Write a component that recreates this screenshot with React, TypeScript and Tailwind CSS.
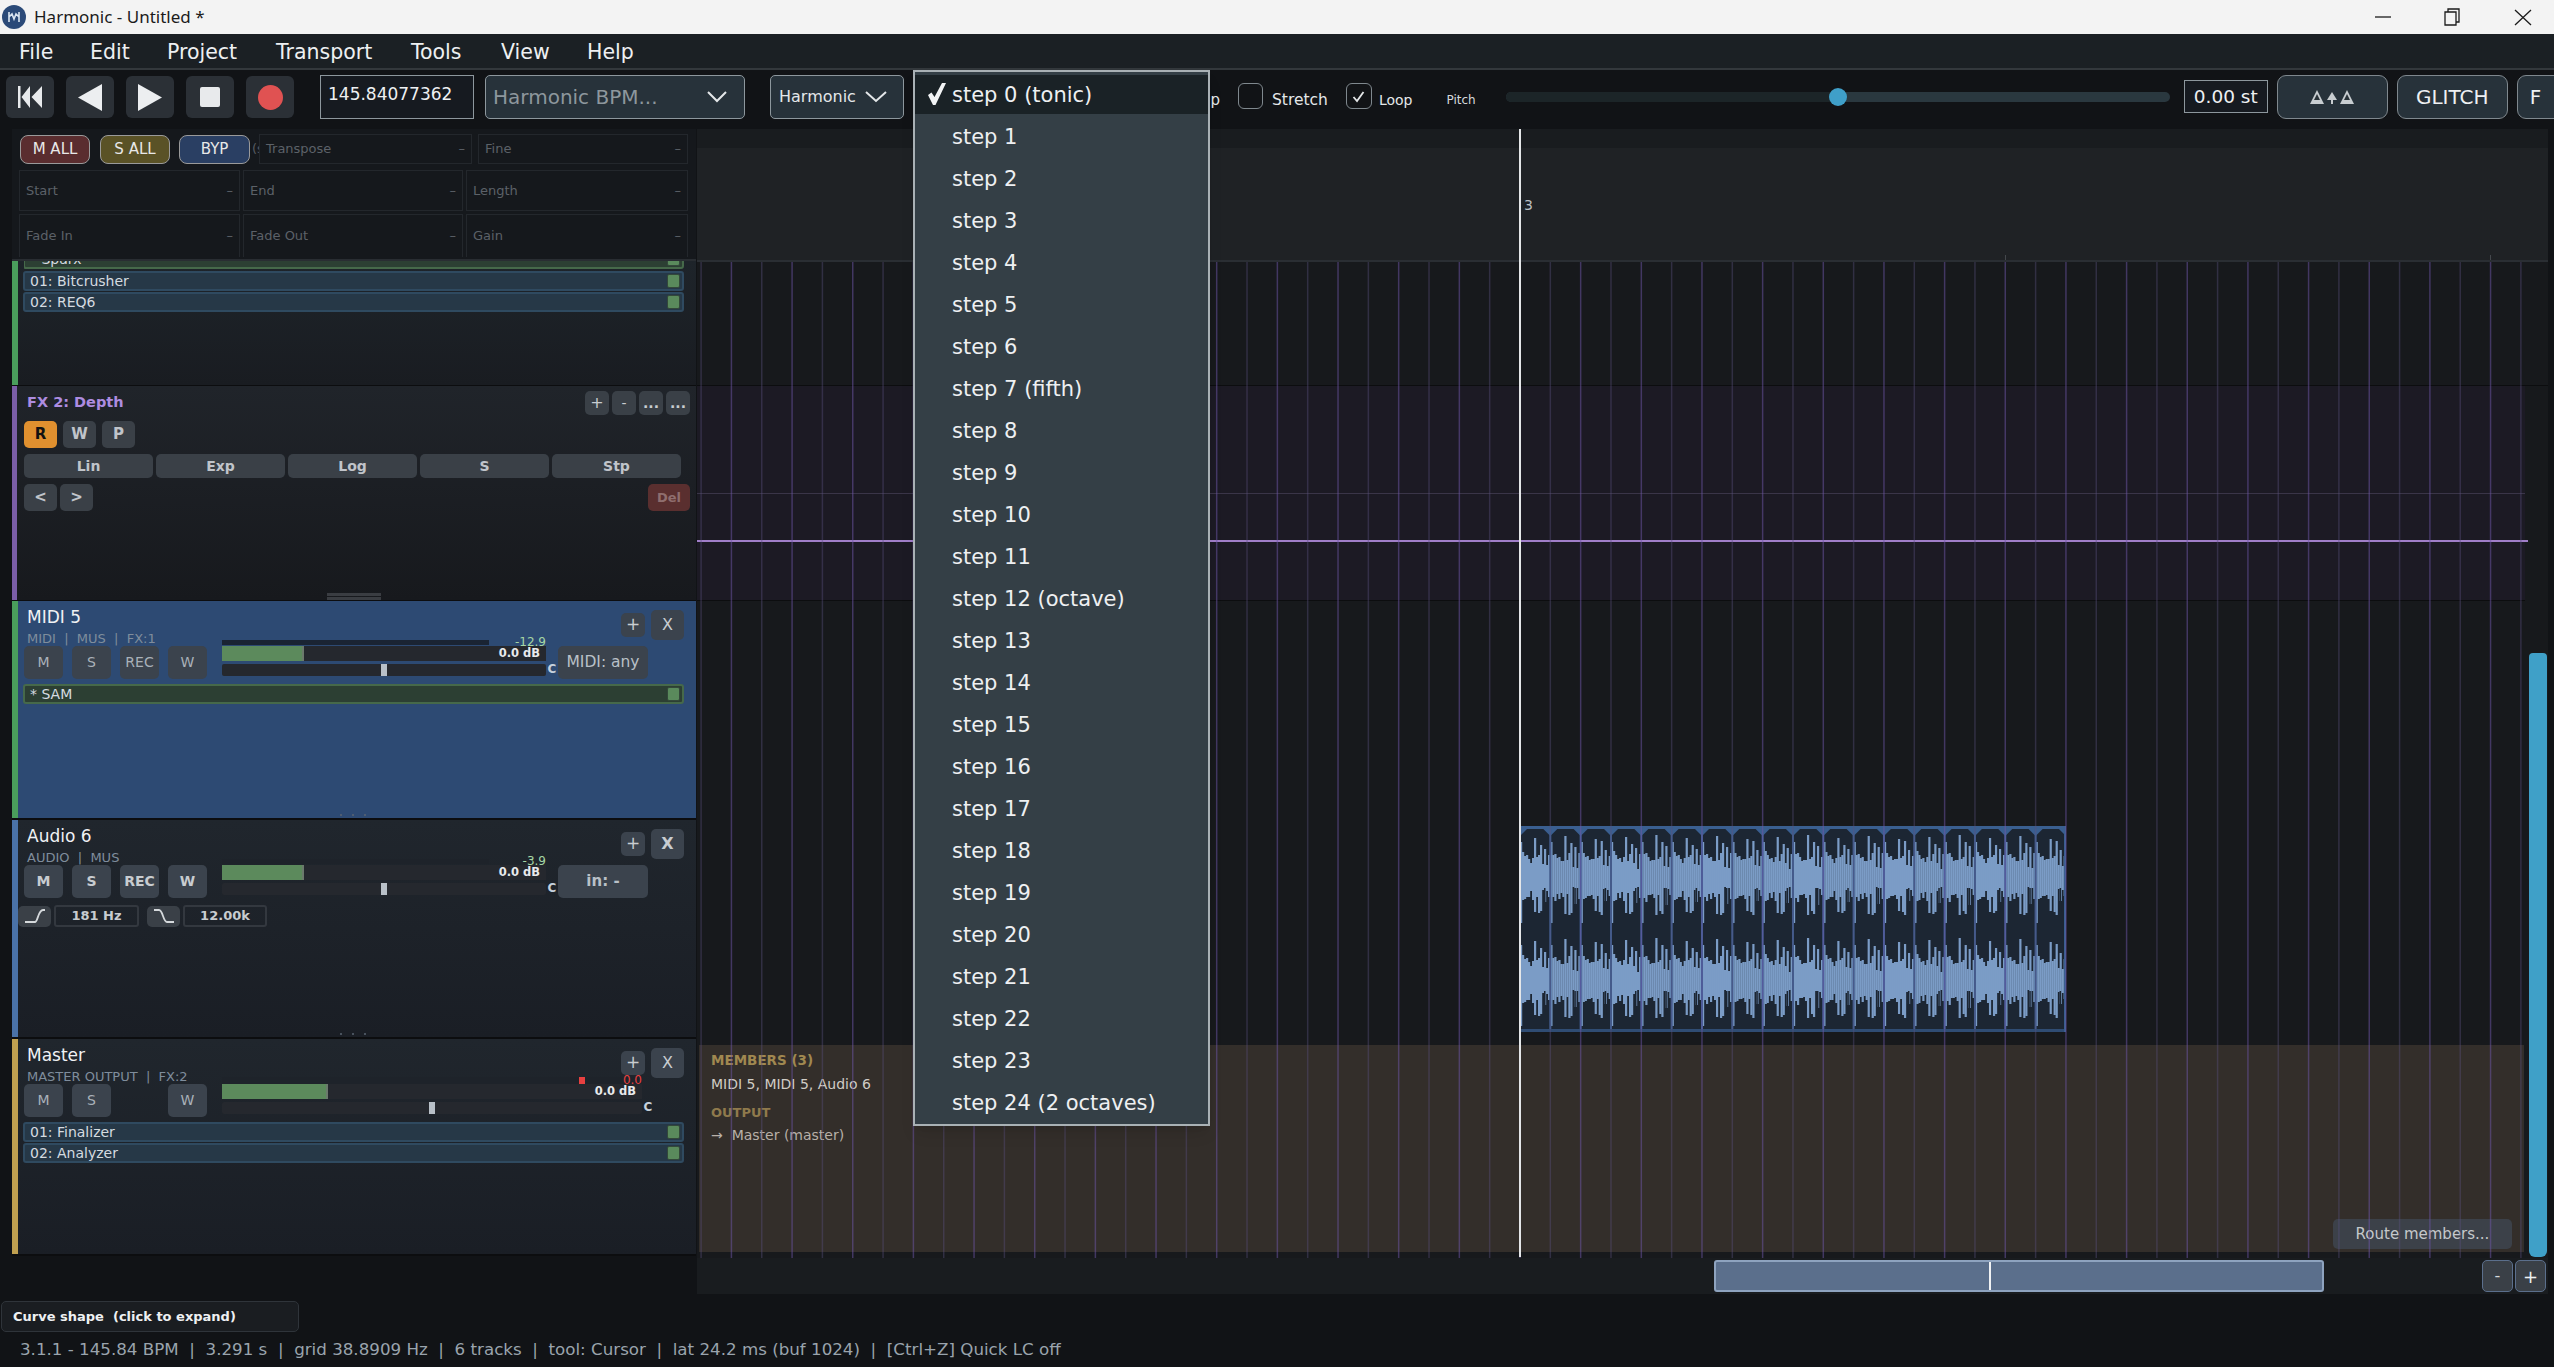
import type { ReactNode } from 'react';

const STEPS = [
  'step 0 (tonic)', 'step 1', 'step 2', 'step 3', 'step 4', 'step 5', 'step 6', 'step 7 (fifth)', 'step 8', 'step 9',
  'step 10', 'step 11', 'step 12 (octave)', 'step 13', 'step 14', 'step 15', 'step 16', 'step 17', 'step 18', 'step 19',
  'step 20', 'step 21', 'step 22', 'step 23', 'step 24 (2 octaves)',
];
const MENUS = [
  { label: 'File', w: 71 }, { label: 'Edit', w: 77 }, { label: 'Project', w: 109 }, { label: 'Transport', w: 135 },
  { label: 'Tools', w: 90 }, { label: 'View', w: 86 }, { label: 'Help', w: 60 },
];

// one 30px repeat of the clip's audio, in px above / below the channel centre
const WAVE_UP = [33, 22, 20, 18, 16, 14, 16, 38, 16, 20, 32, 10, 27, 8, 20];
const WAVE_DOWN = [48, 24, 25, 20, 22, 18, 24, 38, 20, 38, 38, 14, 28, 14, 22];
const GRID = 30.33;
const PLAYHEAD = 823;

function Btn({ className, children }: { className: string; children?: ReactNode }) {
  return <button className={`flex shrink-0 items-center justify-center rounded-[5px] ${className}`}>{children}</button>;
}

function Plugin({ label, green }: { label: string; green?: boolean }) {
  return (
    <div className={`-ml-px flex h-[20px] items-center justify-between rounded-[3px] border-2 pl-[5px] pr-[2px] text-[14px] text-[#d5dbe0] ${green ? 'border-[#46694a] bg-[#2c3f33]' : 'border-[#2f4a60] bg-[#263847]'}`}>
      <span>{label}</span>
      <span className="h-[14px] w-[13px] rounded-[2px] border border-[#33483a] bg-[#5a8a5c]" />
    </div>
  );
}

function Field({ label, className }: { label: string; className: string }) {
  return (
    <div className={`flex items-center justify-between border border-[#23272c] px-[6px] text-[13px] text-[#5c6168] ${className}`}>
      <span>{label}</span>
      <span>–</span>
    </div>
  );
}

function Meter({ wide, peak, peakColor, knob, fill }: { wide?: boolean; peak: string; peakColor: string; knob: string; fill: string }) {
  return (
    <div className={`relative ml-[15px] flex shrink-0 flex-col gap-[3px] ${wide ? 'w-[420px]' : 'w-[324px]'}`}>
      <div className="relative flex h-[15px] items-center justify-end bg-[#25282e] pr-[6px] text-[11.5px] font-bold text-[#e8eaec]">
        <div className={`absolute left-0 top-0 h-full border-r-2 border-[#6b7a6c] bg-[#5c8a5c] ${fill}`} />
        <span className="relative">0.0 dB</span>
      </div>
      <div className="relative h-[12px] rounded-[2px] bg-[#25282e]">
        <div className={`absolute top-0 h-full w-[6px] bg-[#b8c0c8] ${knob}`} />
      </div>
      <span className={`absolute -top-[10px] right-0 z-10 text-[12px] leading-[12px] ${peakColor}`}>{peak}</span>
    </div>
  );
}

function Track({
  name, sub, strip, bg, bold, height, slot, rec = true, meter, children,
}: {
  name: string; sub: string; strip: string; bg: string; bold?: boolean; height: string; slot?: string; rec?: boolean; meter: ReactNode; children?: ReactNode;
}) {
  const btn = `h-[33px] w-[39px] bg-[#3b434d] text-[14px] ${bold ? 'font-bold text-[#c8ccd0]' : 'text-[#a9b1b9]'}`;
  return (
    <div className={`relative flex shrink-0 border-b-2 border-[#0c0d0f] ${height} ${bg}`}>
      <div className={`w-[6px] shrink-0 ${strip}`} />
      <div className="flex min-w-0 flex-1 flex-col pl-[6px] pr-[12px]">
        <div className="flex h-[45px] shrink-0 justify-between">
          <div className="pl-[3px] pt-[6px]">
            <div className="h-[20px] text-[17px] leading-[20px] text-[#f0f2f4]">{name}</div>
            <div className="mt-[4px] h-[15px] whitespace-pre text-[13px] leading-[15px] text-[#7f8d9c]">{sub}</div>
          </div>
          <div className="flex items-start gap-[6px] pt-[9px]">
            <Btn className="mt-[3px] h-[24px] w-[24px] bg-[#3b434d] text-[17px] text-[#c8ccd0]">+</Btn>
            <Btn className={`h-[30px] w-[33px] bg-[#3b434d] text-[16px] text-[#c8ccd0] ${bold ? 'font-bold' : ''}`}>X</Btn>
          </div>
        </div>
        <div className="flex h-[33px] shrink-0">
          <div className="flex gap-[9px]">
            <Btn className={btn}>M</Btn>
            <Btn className={btn}>S</Btn>
            {rec ? <Btn className={btn}>REC</Btn> : <div className="w-[39px]" />}
            <Btn className={btn}>W</Btn>
          </div>
          {meter}
          <span className="flex h-[33px] w-[12px] shrink-0 items-center justify-center pt-[12px] text-[12px] font-bold text-[#c5d0dc]">C</span>
          {slot && <Btn className={`h-[33px] w-[90px] bg-[#3b434d] text-[#b9c0c7] ${bold ? 'text-[15px] font-bold' : 'text-[15.5px]'}`}>{slot}</Btn>}
        </div>
        {children}
      </div>
    </div>
  );
}

function ResizeDots() {
  return (
    <div className="absolute bottom-[2px] left-[328px] flex gap-[10px]">
      <span className="h-[2px] w-[2px] rounded-full bg-[#5a6570]" />
      <span className="h-[2px] w-[2px] rounded-full bg-[#5a6570]" />
      <span className="h-[2px] w-[2px] rounded-full bg-[#5a6570]" />
    </div>
  );
}

function ClipWave() {
  const segments = Array.from({ length: 18 }, (_, s) => s);
  return (
    <svg width="546" height="206" className="block">
      <rect width="546" height="206" fill="#1c2633" />
      {segments.map((s) => {
        const x = s * GRID;
        return (
          <g key={s}>
            <polygon points={`${x},0 ${x + 10},0 ${x},10`} fill="#3a5f90" />
            <polygon points={`${x + GRID - 10},0 ${x + GRID},0 ${x + GRID},10`} fill="#3a5f90" />
            {[49, 152].map((c) =>
              WAVE_UP.map((up, i) => {
                const jitter = ((s * 7 + i * 3) % 5) - 2;
                const top = i === 0 ? up : up + jitter;
                const down = WAVE_DOWN[i] + (i === 0 ? 0 : jitter);
                return <rect key={`${c}-${i}`} x={x + i * 2} y={c - top} width="2.2" height={top + down} fill="#7b9cc6" />;
              }),
            )}
            <rect x={x + 24} y="62" width="1.5" height="24" fill="#1c2633" />
            <rect x={x + 24} y="165" width="1.5" height="24" fill="#1c2633" />
            <rect x={x - 1} y="0" width="2" height="206" fill="#3c5f90" />
          </g>
        );
      })}
      <rect x="0" y="0" width="546" height="3" fill="#3a5f90" />
      <rect x="0" y="203" width="546" height="3" fill="#2f4c73" />
      <rect x="544" y="0" width="2" height="206" fill="#3a5f90" />
    </svg>
  );
}

function GridLines() {
  const lines = Array.from({ length: 61 }, (_, i) => i - 27);
  return (
    <svg width="1851" height="996" className="pointer-events-none absolute left-0 top-0">
      {lines.map((k) => {
        const x = PLAYHEAD + k * GRID;
        return <line key={k} x1={x} x2={x} y1="0" y2="996" stroke={k % 2 === 0 ? '#6d55a8' : '#5a4f80'} strokeOpacity={k % 2 === 0 ? 0.5 : 0.4} strokeWidth="1.5" />;
      })}
    </svg>
  );
}

function TriangleTrio() {
  return (
    <svg width="44" height="14" viewBox="0 0 44 14">
      <path d="M7 0 L14 14 H0 Z" fill="#c8cdd0" />
      <path d="M7 4 L10 10 H4 Z" fill="#2a3338" />
      <path d="M22 2 L27 10 H23 V14 H21 V10 H17 Z" fill="#c8cdd0" />
      <path d="M37 0 L44 14 H30 Z" fill="#c8cdd0" />
      <path d="M37 4 L40 10 H34 Z" fill="#2a3338" />
    </svg>
  );
}

export default function App() {
  const ctl = 'mt-[6px] h-[42px] w-[48px] bg-[#2b3036] rounded-[6px]';
  const selectCls = 'mt-[5px] flex h-[44px] shrink-0 items-center rounded-[5px] border border-[#8d979d] bg-[#27323a]';
  return (
    <div className="relative flex h-[1367px] w-[2554px] flex-col overflow-hidden bg-[#111316] font-['DejaVu_Sans',sans-serif]">
      {/* Window title bar */}
      <div className="flex h-[34px] shrink-0 items-center bg-[#f3f3f3] pl-[2px] font-['Noto_Sans',sans-serif] text-[17px] text-[#1b1b1b]">
        <svg width="24" height="24" viewBox="0 0 24 24">
          <circle cx="12" cy="12" r="12" fill="#2b4a78" />
          <path d="M7 7 V17 M7 12 L10 9 L12 14 L14 9 L17 12 M17 7 V17" fill="none" stroke="#dbe6f2" strokeWidth="1.6" />
        </svg>
        <span className="ml-[8px]">Harmonic - Untitled *</span>
        <svg width="170" height="20" viewBox="0 0 170 20" className="ml-auto mr-[9px]">
          <path d="M0 10 H16" stroke="#1b1b1b" strokeWidth="1.3" />
          <path d="M70 5 H81 V18 H70 Z M73 5 V2 H84 V15 H81" fill="none" stroke="#1b1b1b" strokeWidth="1.3" />
          <path d="M140 3 L156 18 M156 3 L140 18" stroke="#1b1b1b" strokeWidth="1.3" />
        </svg>
      </div>

      {/* Menu bar */}
      <div className="flex h-[36px] shrink-0 items-center border-b-2 border-[#33383c] bg-[#1b2024] pl-[19px] pt-[2px] text-[20.5px] text-[#eef0f2]">
        {MENUS.map((m) => (
          <span key={m.label} className="shrink-0" style={{ width: m.w }}>{m.label}</span>
        ))}
      </div>

      {/* Transport toolbar */}
      <div className="flex h-[59px] shrink-0 items-start overflow-hidden bg-[#111316] pl-[6px]">
        <div className="flex gap-[12px]">
          <Btn className={ctl}>
            <svg width="24" height="22" viewBox="0 0 24 22"><path d="M0 0 H2.5 V22 H0 Z M12 0 V22 L3.5 11 Z M24 0 V22 L13.5 11 Z" fill="#e8eaec" /></svg>
          </Btn>
          <Btn className={ctl}>
            <svg width="24" height="27" viewBox="0 0 24 27"><path d="M24 0 V27 L0 13.5 Z" fill="#eceef0" /></svg>
          </Btn>
          <Btn className={ctl}>
            <svg width="24" height="27" viewBox="0 0 24 27"><path d="M0 0 V27 L24 13.5 Z" fill="#eceef0" /></svg>
          </Btn>
          <Btn className={ctl}><span className="h-[20px] w-[20px] rounded-[2px] bg-[#e8eaec]" /></Btn>
          <Btn className={ctl}><span className="h-[25px] w-[25px] rounded-full bg-[#e05252]" /></Btn>
        </div>
        <div className="ml-[26px] mt-[5px] h-[44px] w-[154px] shrink-0 border border-[#8d979d] bg-[#161a20] pl-[7px] pt-[6px] text-[17px] leading-[24px] text-[#eef0f2]">145.84077362</div>
        <div className={`ml-[11px] w-[260px] justify-between pl-[7px] pr-[17px] text-[20px] text-[#8d979d] ${selectCls}`}>
          <span>Harmonic BPM...</span>
          <svg width="20" height="12" viewBox="0 0 20 12"><path d="M1 1 L10 10 L19 1" fill="none" stroke="#e4e7e9" strokeWidth="2" /></svg>
        </div>
        <div className={`ml-[25px] w-[134px] justify-between pl-[8px] pr-[16px] text-[16px] text-[#e4e7e9] ${selectCls}`}>
          <span>Harmonic</span>
          <svg width="22" height="12" viewBox="0 0 22 12"><path d="M1 1 L11 10 L21 1" fill="none" stroke="#e4e7e9" strokeWidth="2" /></svg>
        </div>
        <div className="mt-[20px] flex w-[334px] shrink-0 justify-end pr-[18px] text-[15px] leading-[20px] text-[#e4e7e9]">Snap</div>
        <span className="mt-[13px] h-[26px] w-[25px] shrink-0 rounded-[6px] border border-[#7f888e]" />
        <span className="ml-[9px] mt-[20px] shrink-0 text-[15.5px] leading-[20px] text-[#e4e7e9]">Stretch</span>
        <span className="ml-[18px] mt-[13px] flex h-[26px] w-[26px] shrink-0 items-center justify-center rounded-[6px] border border-[#7f888e]">
          <svg width="13" height="13" viewBox="0 0 13 13"><path d="M1.5 7 L5 11 L11.5 2" fill="none" stroke="#e4e7e9" strokeWidth="1.8" /></svg>
        </span>
        <span className="ml-[7px] mt-[20px] shrink-0 text-[14px] leading-[20px] text-[#e4e7e9]">Loop</span>
        <span className="ml-[34px] mt-[20px] shrink-0 text-[12px] leading-[20px] text-[#d5d9dc]">Pitch</span>
        <div className="relative ml-[30px] mt-[22px] h-[10px] w-[664px] shrink-0 rounded-full bg-[#2a383f]">
          <div className="h-full w-[332px] rounded-l-full bg-[#1c2528]" />
          <span className="absolute left-[323px] -top-[4px] h-[18px] w-[18px] rounded-full bg-[#3f9fc9]" />
        </div>
        <div className="ml-[14px] mt-[10px] flex h-[33px] w-[84px] shrink-0 items-center justify-center border border-[#8d979d] bg-[#161a20] text-[18.5px] text-[#eef0f2]">0.00 st</div>
        <Btn className="ml-[9px] mt-[5px] h-[44px] w-[111px] rounded-[9px] border border-[#7f888e] bg-[#27323a]"><TriangleTrio /></Btn>
        <Btn className="ml-[9px] mt-[5px] h-[44px] w-[111px] rounded-[9px] border border-[#7f888e] bg-[#27323a] text-[20px] text-[#eef0f2]">GLITCH</Btn>
        <Btn className="ml-[9px] mt-[5px] h-[44px] w-[60px] justify-start rounded-[9px] border border-[#7f888e] bg-[#27323a] pl-[12px] text-[20px] text-[#eef0f2]">F</Btn>
      </div>

      {/* Main area */}
      <div className="flex h-[1129px] shrink-0">
        {/* Track list */}
        <div className="flex w-[697px] shrink-0 flex-col pl-[12px] pr-px">
          <div className="h-[132px] shrink-0 border-b-2 border-[#292d32] bg-[#15181c] pl-[7px] pr-[8px] pt-[5px]">
            <div className="flex h-[30px] items-center pl-px">
              <Btn className="h-[29px] w-[70px] rounded-[8px] border border-[#9a9a9a] bg-[#5a2d2f] text-[15px] text-[#e8e8e8]">M ALL</Btn>
              <Btn className="ml-[10px] h-[29px] w-[70px] rounded-[8px] border border-[#9a9a9a] bg-[#5a5226] text-[15px] text-[#e8e8e8]">S ALL</Btn>
              <Btn className="ml-[9px] h-[29px] w-[71px] rounded-[8px] border border-[#9a9a9a] bg-[#2a3f63] text-[15px] text-[#e8e8e8]">BYP</Btn>
              <span className="ml-[2px] w-[7px] overflow-hidden text-[13px] text-[#565b62]">(s</span>
              <Field label="Transpose" className="h-[30px] w-[213px]" />
              <Field label="Fine" className="ml-[6px] h-[30px] w-[210px]" />
            </div>
            <div className="mt-[6px] grid h-[41px] grid-cols-[221px_220px_222px] gap-[3px]">
              <Field label="Start" className="" />
              <Field label="End" className="" />
              <Field label="Length" className="" />
            </div>
            <div className="mt-[3px] grid h-[43px] grid-cols-[221px_220px_222px] gap-[3px]">
              <Field label="Fade In" className="border-b-0" />
              <Field label="Fade Out" className="border-b-0" />
              <Field label="Gain" className="border-b-0" />
            </div>
          </div>

          {/* Track scrolled under the inspector */}
          <div className="flex h-[125px] shrink-0 border-b border-[#0c0d0f] bg-linear-to-b from-[#1e242a] to-[#191c21]">
            <div className="w-[6px] shrink-0 bg-[#4a9e5c]" />
            <div className="flex min-w-0 flex-1 flex-col gap-[1px] pl-[6px] pr-[12px]">
              <div className="flex h-[8px] flex-col justify-end overflow-hidden">
                <div className="shrink-0"><Plugin label="* Sparx" green /></div>
              </div>
              <div className="mt-[1px]"><Plugin label="01: Bitcrusher" /></div>
              <Plugin label="02: REQ6" />
            </div>
          </div>

          {/* Automation lane */}
          <div className="relative flex h-[215px] shrink-0 border-b border-[#0c0d0f] bg-linear-to-b from-[#20242a] to-[#17191d]">
            <div className="w-[5px] shrink-0 bg-[#7b5ea7]" />
            <div className="min-w-0 flex-1 pl-[7px] pr-[6px]">
              <div className="flex h-[35px] items-start justify-between">
                <span className="pl-[3px] pt-[7px] text-[14.5px] font-bold leading-[18px] text-[#ad8ce0]">FX 2: Depth</span>
                <div className="flex gap-[3px] pt-[5px]">
                  <Btn className="h-[24px] w-[24px] bg-[#3a4047] text-[16px] text-[#c8ccd0]">+</Btn>
                  <Btn className="h-[24px] w-[24px] bg-[#3a4047] text-[14px] text-[#c8ccd0]">-</Btn>
                  <Btn className="h-[24px] w-[24px] bg-[#3a4047] text-[14px] font-bold text-[#c8ccd0]">...</Btn>
                  <Btn className="h-[24px] w-[24px] bg-[#3a4047] text-[14px] font-bold text-[#c8ccd0]">...</Btn>
                </div>
              </div>
              <div className="flex gap-[6px]">
                <Btn className="h-[27px] w-[33px] bg-[#e0902f] text-[15px] font-bold text-[#111]">R</Btn>
                <Btn className="h-[27px] w-[33px] bg-[#3a4047] text-[15px] font-bold text-[#c0c4ca]">W</Btn>
                <Btn className="h-[27px] w-[33px] bg-[#3a4047] text-[15px] font-bold text-[#c0c4ca]">P</Btn>
              </div>
              <div className="mt-[6px] flex gap-[3px]">
                {['Lin', 'Exp', 'Log', 'S', 'Stp'].map((c) => (
                  <Btn key={c} className="h-[24px] w-[129px] bg-[#3a4047] text-[14px] font-bold text-[#c0c4ca]">{c}</Btn>
                ))}
              </div>
              <div className="mt-[6px] flex gap-[3px]">
                <Btn className="h-[27px] w-[33px] bg-[#3a4047] text-[15px] font-bold text-[#c0c4ca]">&lt;</Btn>
                <Btn className="h-[27px] w-[33px] bg-[#3a4047] text-[15px] font-bold text-[#c0c4ca]">&gt;</Btn>
                <Btn className="ml-auto h-[27px] w-[42px] bg-[#5a2f2f] text-[13px] font-bold text-[#8f6e6e]">Del</Btn>
              </div>
            </div>
            <div className="absolute bottom-0 left-[315px] flex w-[54px] flex-col gap-[1px]">
              <span className="h-[3px] bg-[#3a3d42]" />
              <span className="h-[3px] bg-[#3a3d42]" />
            </div>
          </div>

          <Track
            name="MIDI 5" sub="MIDI  |  MUS  |  FX:1" strip="bg-[#4a9e5c]" bg="bg-[#2d4a73]" height="h-[219px]" slot="MIDI: any"
            meter={
              <>
                <Meter peak="-12.9" peakColor="text-[#a5d6a5]" knob="left-[159px]" fill="w-[82px]" />
                <div className="absolute left-[210px] top-[39px] h-[5px] w-[267px] bg-[#1a2433]" />
              </>
            }
          >
            <div className="mt-[5px]"><Plugin label="* SAM" green /></div>
            <ResizeDots />
          </Track>

          <Track
            name="Audio 6" sub="AUDIO  |  MUS" strip="bg-[#4a72a8]" bg="bg-linear-to-b from-[#20262d] to-[#1a1e25]" bold height="h-[219px]" slot="in: -"
            meter={
              <>
                <Meter peak="-3.9" peakColor="text-[#a5d6a5]" knob="left-[159px]" fill="w-[82px]" />
                <div className="absolute left-[210px] top-[39px] h-[5px] w-[267px] bg-[#1e232a]" />
              </>
            }
          >
            <div className="-ml-[6px] mt-[7px] flex items-center text-[13px] font-bold text-[#c8ccd0]">
              <Btn className="h-[21px] w-[33px] bg-[#3a4047]">
                <svg width="22" height="16" viewBox="0 0 22 16"><path d="M1 14 H11 C14 14 14 2 19 2 H21" fill="none" stroke="#d5d9dc" strokeWidth="1.8" /></svg>
              </Btn>
              <span className="ml-[3px] flex h-[22px] w-[85px] items-center justify-center rounded-[3px] border-2 border-[#33383f]">181 Hz</span>
              <Btn className="ml-[8px] h-[21px] w-[33px] bg-[#3a4047]">
                <svg width="22" height="16" viewBox="0 0 22 16"><path d="M1 2 H6 C10 2 10 14 14 14 H21" fill="none" stroke="#d5d9dc" strokeWidth="1.8" /></svg>
              </Btn>
              <span className="ml-[3px] flex h-[22px] w-[84px] items-center justify-center rounded-[3px] border-2 border-[#33383f]">12.00k</span>
            </div>
            <ResizeDots />
          </Track>

          <Track
            name="Master" sub="MASTER OUTPUT  |  FX:2" strip="bg-[#c0a050]" bg="bg-linear-to-b from-[#20262d] to-[#1a1e25]" height="h-[217px]" rec={false}
            meter={
              <>
                <Meter wide peak="0.0" peakColor="text-[#e84040]" knob="left-[207px]" fill="w-[106px]" />
                <div className="absolute left-[210px] top-[38px] h-[7px] w-[420px] bg-[#1e232a]">
                  <div className="ml-[357px] h-full w-[6px] bg-[#e84040]" />
                </div>
              </>
            }
          >
            <div className="mt-[5px] flex flex-col gap-[1px]">
              <Plugin label="01: Finalizer" />
              <Plugin label="02: Analyzer" />
            </div>
          </Track>
        </div>

        {/* Timeline */}
        <div className="relative flex w-[1851px] shrink-0 flex-col">
          <div className="relative h-[133px] shrink-0 border-b-2 border-[#2a2e33] bg-[#1f2225]">
            <div className="h-[19px] bg-[#191c1f]" />
            <span className="absolute left-[827px] top-[67px] text-[14px] leading-[18px] text-[#bcc0c4]">3</span>
            <span className="absolute left-[1308px] bottom-0 h-[5px] w-px bg-[#44484d]" />
            <span className="absolute left-[1793px] bottom-0 h-[5px] w-px bg-[#44484d]" />
          </div>
          <div className="relative flex min-h-0 flex-1 flex-col bg-[#17191c]">
            <div className="h-[124px] shrink-0 border-b border-[#0c0d0f] bg-[#17191c]" />
            <div className="relative mr-[23px] h-[215px] shrink-0 border-b border-[#0c0d0f] bg-[#1c1a24]">
              <div className="absolute left-0 right-0 top-[107px] h-px bg-[#3a3548]" />
              <div className="absolute left-0 -right-[3px] top-[154px] h-[2px] bg-[#a07ec8]" />
            </div>
            <div className="h-[444px] shrink-0" />
            <div className="relative ml-[2px] mr-[24px] h-[207px] shrink-0 bg-[#332e2a] pl-[12px] pt-[7px]">
              <div className="text-[13.5px] font-bold leading-[16px] text-[#a08850]">MEMBERS (3)</div>
              <div className="mt-[8px] text-[14px] leading-[16px] text-[#d0ccc5]">MIDI 5, MIDI 5, Audio 6</div>
              <div className="mt-[13px] text-[13px] font-bold leading-[16px] text-[#8f7a4c]">OUTPUT</div>
              <div className="mt-[6px] whitespace-pre text-[14px] leading-[16px] text-[#b8b0a8]">→  Master (master)</div>
              <Btn className="absolute bottom-[3px] right-[12px] h-[30px] w-[179px] bg-[#3c4149] text-[15px] text-[#c5c8cb]">Route members...</Btn>
            </div>
            <div className="absolute left-[823px] top-[564px]"><ClipWave /></div>
            <GridLines />
            <div className="absolute bottom-px left-[1832px] top-[391px] w-[18px] rounded-b-[6px] rounded-t-[4px] bg-[#3fa0c8]" />
          </div>
          <div className="absolute bottom-px left-[822px] top-0 w-[2px] bg-[#e4e6e8]" />
        </div>
      </div>

      {/* Timeline scrollbar row */}
      <div className="flex h-[36px] w-[2548px] shrink-0">
        <div className="w-[697px] shrink-0" />
        <div className="flex flex-1 items-start bg-[#191c1f] pl-[1017px] pt-[2px]">
          <div className="relative h-[32px] w-[610px] shrink-0 rounded-[3px] border-2 border-[#8ea3bf] bg-[#5b6f8c]">
            <span className="absolute left-[273px] top-0 h-full w-[2px] bg-[#f0f2f4]" />
          </div>
          <Btn className="ml-[158px] h-[32px] w-[31px] border border-[#5b6f8c] bg-[#3a4047] text-[16px] text-[#d5d9dc]">-</Btn>
          <Btn className="ml-[2px] h-[32px] w-[31px] border border-[#5b6f8c] bg-[#3a4047] text-[18px] text-[#eef0f2]">+</Btn>
        </div>
      </div>

      {/* Footer */}
      <div className="ml-px mt-[7px] flex h-[31px] w-[298px] shrink-0 items-center whitespace-pre rounded-[5px] border border-[#2f343a] bg-[#1a1d21] pl-[11px] text-[13px] font-bold text-[#eef0f2]">
        Curve shape  (click to expand)
      </div>
      <div className="flex flex-1 items-center whitespace-pre pl-[20px] text-[16.7px] text-[#9aa4ad]">
        3.1.1 - 145.84 BPM  |  3.291 s  |  grid 38.8909 Hz  |  6 tracks  |  tool: Cursor  |  lat 24.2 ms (buf 1024)  |  [Ctrl+Z] Quick LC off
      </div>

      {/* Open combo popup */}
      <div className="absolute left-[913px] top-[70px] z-20 h-[1056px] w-[297px] border-2 border-[#a9b1b5] bg-[#343f46] pt-[3px] text-[21px] text-[#eef0f2] shadow-lg">
        {STEPS.map((s, i) => (
          <div key={s} className={`relative flex items-center pl-[37px] pt-[2px] ${i === 0 ? 'mb-[2px] h-[39px] bg-[#1a2226]' : 'h-[42px]'}`}>
            {i === 0 && (
              <svg width="18" height="22" viewBox="0 0 18 22" className="absolute left-[13px] top-[8px]">
                <path d="M0 12 L3.5 9.5 L6.5 14 L14 0 H18 L7.5 22 H5 Z" fill="#f2f4f5" />
              </svg>
            )}
            {s}
          </div>
        ))}
      </div>
    </div>
  );
}
